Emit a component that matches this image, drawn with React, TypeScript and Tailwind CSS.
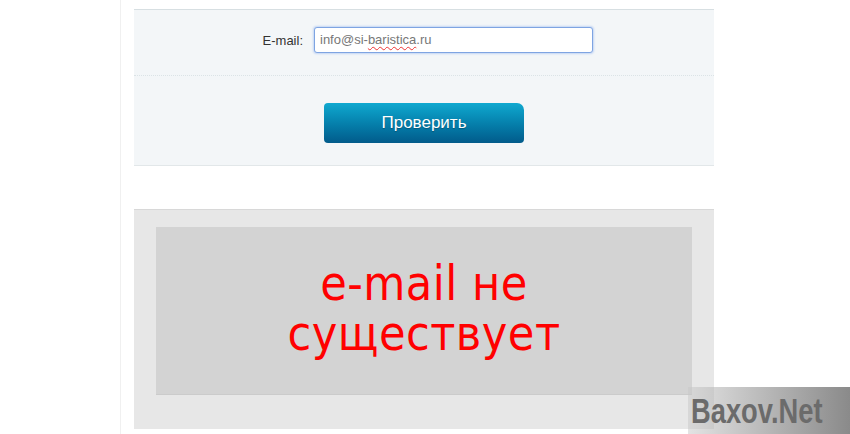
export default function App() {
  return (
    <div className="relative h-[434px] w-[850px] overflow-hidden bg-white font-['Liberation_Sans',Arial,sans-serif]">
      <div className="ml-[120px] h-full w-[594px] border-l border-[#f0f0f0] pl-[13px] pt-[9px]">
        {/* form */}
        <div className="border-t border-[#d7dfe2] bg-[#f3f6f8]">
          <div className="flex h-[66px] items-start border-b border-dotted border-[#dbe3e6] pt-[17px]">
            <label className="w-[169px] pt-[4px] text-right text-[13px] text-[#333]">E-mail:</label>
            <div className="ml-[11px] flex h-[26px] w-[279px] items-center rounded-[3px] border border-[#7ea4e2] bg-white pl-[5px] text-[13px] text-[#777] shadow-[0_0_2px_1px_#c3d6f4]">
              info@si-<span className="underline decoration-[#e33] decoration-wavy decoration-1 underline-offset-2">baristica</span>.ru
            </div>
          </div>
          <div className="flex h-[90px] justify-center border-b border-[#e2e7e9] pt-[27px]">
            <button
              type="button"
              className="h-[40px] w-[200px] rounded-[4px] rounded-tr-[7px] bg-gradient-to-b from-[#10a9d0] to-[#025b8b] text-[17px] text-white [text-shadow:0_1px_1px_rgba(0,0,0,0.25)]"
            >
              Проверить
            </button>
          </div>
        </div>

        {/* result */}
        <div className="mt-[43px] h-[220px] border-t border-[#d8d8d8] bg-[#e7e7e7] px-[22px] pt-[17px]">
          <div className="flex h-[168px] flex-col items-center justify-center border-b border-[#cbcbcb] bg-[#d3d3d3] pb-[6px] text-center font-['DejaVu_Sans_Condensed','DejaVu_Sans',sans-serif] text-[48px] leading-[50px] tracking-[0.5px] text-[#ff0000] [font-stretch:condensed]">
            <span>e-mail не</span>
            <span>существует</span>
          </div>
        </div>
      </div>

      {/* watermark */}
      <div className="absolute bottom-0 right-0 flex h-[47px] w-[162px] items-center bg-gradient-to-r from-[rgba(200,200,200,0.5)] to-[#8a8a8a] pl-[3px]">
        <span className="inline-block origin-left scale-x-[0.78] font-['Liberation_Sans',sans-serif] text-[35px] font-bold leading-none text-[#6b6b6b]">
          Baxov.Net
        </span>
      </div>
    </div>
  );
}
